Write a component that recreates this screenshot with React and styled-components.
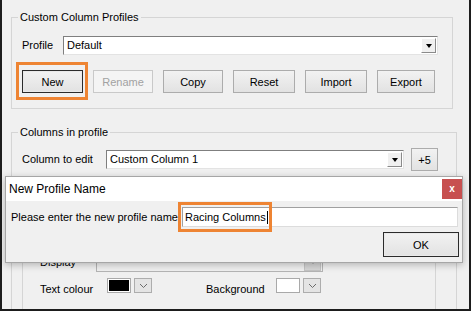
import React from "react";
import styled, { createGlobalStyle } from "styled-components";

const GlobalStyle = createGlobalStyle`
  html, body {
    margin: 0;
    padding: 0;
    background: #ffffff;
  }
  body {
    font-family: "Liberation Sans", Arial, sans-serif;
    font-size: 11px;
    color: #000;
  }
`;

const App = () => {
  return (
    <>
      <GlobalStyle />
      <Window>
        <Group $width={442} $height={98}>
          <Legend>Custom Column Profiles</Legend>
          <Row $top={12}>
            <Label $width={41}>Profile</Label>
            <Combo $width={375}>
              <ComboText>Default</ComboText>
              <DropButton />
            </Combo>
          </Row>
          <ButtonRow>
            <Highlight>
              <Button $w={61} $focused>New</Button>
            </Highlight>
            <Button $w={60} disabled>Rename</Button>
            <Button $w={60}>Copy</Button>
            <Button $w={62}>Reset</Button>
            <Button $w={62}>Import</Button>
            <Button $w={58}>Export</Button>
          </ButtonRow>
        </Group>

        <Group $width={446} $height={200} $gap={17}>
          <Legend>Columns in profile</Legend>
          <Row $top={9}>
            <Label $width={84}>Column to edit</Label>
            <Combo $width={298}>
              <ComboText>Custom Column 1</ComboText>
              <DropButton />
            </Combo>
            <Button $w={27} $h={23} $ml={7}>+5</Button>
          </Row>
          <Panel>
            <Row>
              <Label $width={56}>Display</Label>
              <Combo $width={227} $height={20} $disabled>
                <ComboText />
                <DropButton $flat />
              </Combo>
            </Row>
            <ColourRow>
              <Label $width={67} $drop={5}>Text colour</Label>
              <ColourPicker>
                <Swatch $fill="#000000" />
                <ColourDrop>
                  <Chevron />
                </ColourDrop>
              </ColourPicker>
              <Label $width={70} $drop={5} $ml={54}>Background</Label>
              <ColourPicker>
                <Swatch $fill="#ffffff" />
                <ColourDrop>
                  <Chevron />
                </ColourDrop>
              </ColourPicker>
            </ColourRow>
          </Panel>
        </Group>

        <Dialog>
          <TitleBar>
            <span>New Profile Name</span>
            <CloseButton>x</CloseButton>
          </TitleBar>
          <DialogBody>
            <PromptRow>
              <span>Please enter the new profile name</span>
              <TextBox>
                <span>Racing Columns</span>
                <Caret />
                <TextHighlight />
              </TextBox>
            </PromptRow>
            <OkRow>
              <Button $w={76} $h={25} $focused>OK</Button>
            </OkRow>
          </DialogBody>
        </Dialog>
      </Window>
    </>
  );
};

export default App;

const Chevron = () => (
  <svg width="9" height="6" viewBox="0 0 9 6">
    <polyline points="1,1 4.5,4.5 8,1" fill="none" stroke="#6b6b6b" strokeWidth="1" />
  </svg>
);

const orange = "#ee8433";

const Window = styled.div`
  position: relative;
  box-sizing: border-box;
  width: 471px;
  height: 311px;
  overflow: hidden;
  background: #f0f0f0;
  border: 2px solid #1d1d1d;
  border-top: none;
  padding: 11px 0 0 9px;
`;

const Group = styled.fieldset`
  box-sizing: border-box;
  margin: ${(p) => p.$gap || 0}px 0 0 0;
  width: ${(p) => p.$width}px;
  height: ${(p) => p.$height}px;
  border: 1px solid #d5d5d5;
  padding: 0 0 0 10px;
`;

const Legend = styled.legend`
  margin-left: -4px;
  padding: 0 2px;
  font-size: 11px;
  line-height: 13px;
`;

const Row = styled.div`
  display: flex;
  align-items: center;
  margin-top: ${(p) => p.$top || 0}px;
`;

const Label = styled.span`
  flex: none;
  width: ${(p) => p.$width}px;
  margin-left: ${(p) => p.$ml || 0}px;
  margin-top: ${(p) => p.$drop || 0}px;
  line-height: 13px;
  white-space: nowrap;
`;

const Combo = styled.div`
  box-sizing: border-box;
  display: flex;
  align-items: center;
  width: ${(p) => p.$width}px;
  height: ${(p) => p.$height || 19}px;
  background: ${(p) => (p.$disabled ? "#f0f0f0" : "#ffffff")};
  border: 1px solid;
  border-color: ${(p) =>
    p.$disabled ? "#b4b4b4" : "#7f7f7f #e3e3e3 #e3e3e3 #7f7f7f"};
  padding: 0 1px 0 3px;
`;

const ComboText = styled.span`
  flex: 1;
  line-height: 13px;
`;

const DropButton = styled.span`
  box-sizing: border-box;
  width: ${(p) => (p.$flat ? 17 : 15)}px;
  height: ${(p) => (p.$flat ? 17 : 15)}px;
  display: flex;
  align-items: center;
  justify-content: center;
  background: ${(p) => (p.$flat ? "#d6d6d6" : "#f0f0f0")};
  border: 1px solid;
  border-color: ${(p) =>
    p.$flat ? "#c4c4c4" : "#ffffff #8a8a8a #8a8a8a #ffffff"};

  &::after {
    content: "";
    border-left: 3.5px solid transparent;
    border-right: 3.5px solid transparent;
    border-top: 4px solid ${(p) => (p.$flat ? "#8c8c8c" : "#000")};
  }
`;

const ButtonRow = styled.div`
  display: flex;
  gap: 10px;
  margin-top: 15px;
`;

const Highlight = styled.div`
  position: relative;
  display: flex;

  &::after {
    content: "";
    position: absolute;
    inset: -8px -5px -7px -6px;
    border: 3px solid ${orange};
    pointer-events: none;
  }
`;

const Button = styled.button`
  box-sizing: border-box;
  flex: none;
  width: ${(p) => p.$w}px;
  height: ${(p) => p.$h || 23}px;
  margin-left: ${(p) => p.$ml || 0}px;
  padding: 0;
  font-family: "Liberation Sans", Arial, sans-serif;
  font-size: 11px;
  color: #000;
  background: linear-gradient(#f2f2f2, #e2e2e2);
  border: 1px solid ${(p) => (p.$focused ? "#2b2b2b" : "#acacac")};
  box-shadow: ${(p) => (p.$focused ? "inset 0 0 0 1px #e9e9e9" : "none")};
  border-radius: 0;

  &:disabled {
    color: #a2a2a2;
    background: #f4f4f4;
    border-color: #c9c9c9;
  }
`;

const Panel = styled.div`
  box-sizing: border-box;
  width: 414px;
  height: 160px;
  margin-top: 8px;
  border: 1px solid #d5d5d5;
  padding: 72px 0 0 17px;
`;

const ColourRow = styled.div`
  display: flex;
  align-items: flex-start;
  margin-top: 6px;
`;

const ColourPicker = styled.div`
  display: flex;
  gap: 3px;
`;

const Swatch = styled.span`
  box-sizing: border-box;
  width: 24px;
  height: 15px;
  border: 1px solid #a9a9a9;
  padding: 1px;
  background: #fff;

  &::after {
    content: "";
    display: block;
    width: 100%;
    height: 100%;
    background: ${(p) => p.$fill};
  }
`;

const ColourDrop = styled.span`
  box-sizing: border-box;
  width: 18px;
  height: 15px;
  display: flex;
  align-items: center;
  justify-content: center;
  background: #e4e4e4;
  border: 1px solid #adadad;
`;

const Dialog = styled.div`
  position: absolute;
  left: 3px;
  top: 176px;
  box-sizing: border-box;
  width: 458px;
  height: 87px;
  display: flex;
  flex-direction: column;
  background: #f0f0f0;
  border: 1px solid #a6a6a6;
  box-shadow: 0 2px 7px rgba(0, 0, 0, 0.25);
`;

const TitleBar = styled.div`
  height: 24px;
  display: flex;
  align-items: center;
  justify-content: space-between;
  padding-left: 3px;
  background: #fff;
  font-size: 12px;
`;

const CloseButton = styled.span`
  width: 20px;
  height: 20px;
  display: flex;
  align-items: center;
  justify-content: center;
  background: #c75050;
  color: #fff;
  font-size: 10px;
  font-weight: bold;
  line-height: 1;
`;

const DialogBody = styled.div`
  padding: 6px 4px 0 5px;
`;

const PromptRow = styled.div`
  display: flex;
  align-items: center;
  justify-content: space-between;
`;

const TextBox = styled.div`
  position: relative;
  box-sizing: border-box;
  width: 276px;
  height: 20px;
  display: flex;
  align-items: center;
  padding-left: 2px;
  background: #fff;
  border: 1px solid;
  border-color: #a0a0a0 #dcdcdc #dcdcdc #a0a0a0;
`;

const Caret = styled.span`
  width: 1px;
  height: 13px;
  margin-left: 1px;
  background: #000;
`;

const TextHighlight = styled.span`
  position: absolute;
  left: -5px;
  top: -6px;
  box-sizing: border-box;
  width: 94px;
  height: 30px;
  border: 3px solid ${orange};
`;

const OkRow = styled.div`
  display: flex;
  justify-content: flex-end;
  margin-top: 5px;
  margin-right: -1px;
`;
